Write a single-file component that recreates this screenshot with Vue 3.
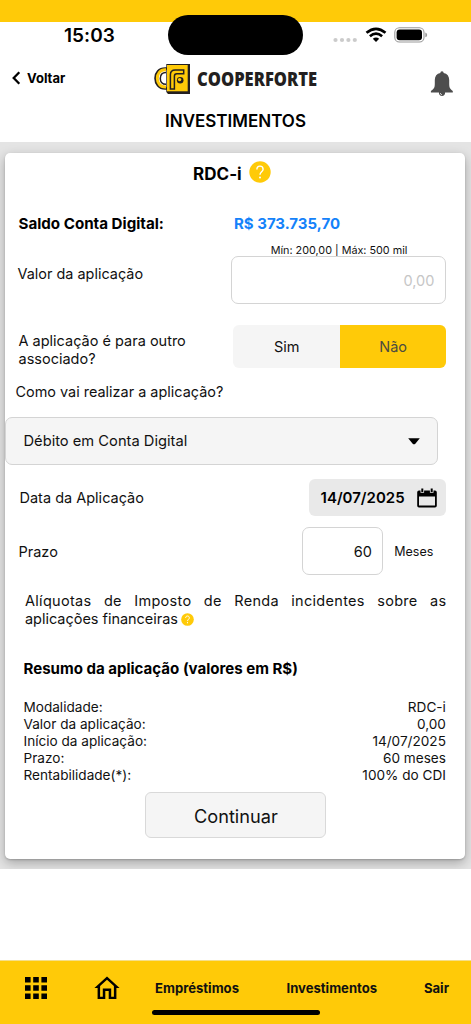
<script setup>
const summary = [
  { label: 'Modalidade:', value: 'RDC-i' },
  { label: 'Valor da aplicação:', value: '0,00' },
  { label: 'Início da aplicação:', value: '14/07/2025' },
  { label: 'Prazo:', value: '60 meses' },
  { label: 'Rentabilidade(*):', value: '100% do CDI' },
]
</script>

<template>
  <div class="screen">
    <header class="header">
      <div class="stripe"></div>
      <div class="island"></div>
      <div class="status">
        <span class="clock">15:03</span>
        <div class="signals">
          <svg class="dots" width="26" height="6" viewBox="0 0 26 6">
            <g fill="#cbcbcb"><circle cx="3.5" cy="3" r="2.1" /><circle cx="10" cy="3" r="2.1" /><circle cx="16.4" cy="3" r="2.1" /><circle cx="22.8" cy="3" r="2.1" /></g>
          </svg>
          <svg class="wifi" width="22" height="16" viewBox="0 0 22 16">
            <g fill="none" stroke="#000" stroke-width="2.7">
              <path d="M1.5 5.8Q11 -2.2 20.5 5.8" />
              <path d="M4.9 9.2Q11 4 17.1 9.2" />
            </g>
            <path d="M7.8 11.8Q11 9 14.2 11.8L11 15Z" />
          </svg>
          <svg class="battery" width="34" height="16" viewBox="0 0 34 16">
            <rect x="0.8" y="0.8" width="29.2" height="14.2" rx="4.6" fill="none" stroke="#999" stroke-width="1.1" />
            <rect x="2.6" y="2.5" width="25.4" height="10.8" rx="3" />
            <path d="M31.3 5.6Q33.2 6.2 33.2 7.9T31.3 10.2Z" fill="#999" />
          </svg>
        </div>
      </div>
      <div class="brandbar">
        <div class="back">
          <svg width="9" height="14" viewBox="0 0 9 14"><path d="M7.3 1.3L1.7 7L7.3 12.7" fill="none" stroke="#000" stroke-width="2.3" /></svg>
          <span>Voltar</span>
        </div>
        <div class="brand">
          <svg width="37" height="32" viewBox="0 0 37 32">
            <path d="M13 5.5H11.2C4.8 5.5 1.4 10 1.4 15.3S4.8 25.5 11.2 25.5H13" fill="none" stroke="#231f20" stroke-width="2.4" />
            <path d="M12 6.8H11.2C6 6.8 3.3 10.8 3.3 15.3S6 24 11.2 24H12" fill="none" stroke="#ffca08" stroke-width="2.9" />
            <path d="M12 9.5C8 9.5 6.3 12.2 6.3 15.4S8 21.2 12 21.2" fill="none" stroke="#231f20" stroke-width="1.5" />
            <path d="M12.3 1H36V31H14L12.3 29Z" fill="#231f20" />
            <path d="M13 2H33.7V28.3H13Z" fill="#ffca08" />
            <path d="M16.4 26V11.8Q16.4 7 21.2 7H29.7V10.7H22.8Q20.4 10.7 20.4 13.2V26Z" fill="#ffca08" stroke="#231f20" stroke-width="1.5" />
            <circle cx="26.2" cy="17.3" r="3.3" fill="#231f20" />
            <circle cx="25.6" cy="16.6" r="1.7" fill="#ffca08" />
          </svg>
          <span class="brand-name">COOPERFORTE</span>
        </div>
        <svg class="bell" width="24" height="26" viewBox="0 0 24 26">
          <path fill="#4d4d4d" d="M12 .3C13.1.3 13.6 1 13.6 2.1C17.3 2.8 19.2 5.4 19.2 9V12.5C19.2 16.6 20 18.1 22.8 20V21.5H15.1C15.1 23.8 14 25 12 25S8.9 23.8 8.9 21.5H.9V20C4 18.1 4.8 16.6 4.8 12.5V9C4.8 5.4 6.7 2.8 10.4 2.1C10.4 1 10.9.3 12 .3Z" />
          <path d="M10.3 22Q10.5 23.6 12 23.8" stroke="#fff" stroke-width=".7" fill="none" />
        </svg>
      </div>
      <h1>INVESTIMENTOS</h1>
    </header>

    <main class="body">
      <section class="card">
        <div class="title">
          <h2>RDC-i</h2>
          <svg width="22" height="22" viewBox="0 0 22 22">
            <circle cx="11" cy="11" r="10.7" fill="#ffca08" />
            <path d="M7.9 8.5C7.9 6.4 9.1 5.1 11 5.1S14.1 6.4 14.1 8.2C14.1 10.8 11 10.8 11 13.7" fill="none" stroke="#fff" stroke-width="1.4" />
            <circle cx="11" cy="16.4" r="1" fill="#fff" />
          </svg>
        </div>

        <div class="row balance">
          <strong>Saldo Conta Digital:</strong>
          <strong class="amount">R$ 373.735,70</strong>
        </div>

        <div class="limits"><span>Mín: 200,00 | Máx: 500 mil</span></div>
        <div class="row value">
          <label>Valor da aplicação</label>
          <div class="field">0,00</div>
        </div>

        <div class="row member">
          <label>A aplicação é para outro<br />associado?</label>
          <div class="toggle">
            <span>Sim</span>
            <span class="on">Não</span>
          </div>
        </div>

        <div class="how">Como vai realizar a aplicação?</div>
        <div class="select">
          <span>Débito em Conta Digital</span>
          <svg width="12" height="7" viewBox="0 0 12 7"><path d="M.2.3H11.8L7.3 5.7Q6 7 4.7 5.7Z" /></svg>
        </div>

        <div class="row date">
          <label>Data da Aplicação</label>
          <div class="datebox">
            <span>14/07/2025</span>
            <svg width="20" height="20" viewBox="0 0 20 20">
              <path fill-rule="evenodd" d="M2 2.4H18Q19.8 2.4 19.8 4.2V17.8Q19.8 19.6 18 19.6H2Q.2 19.6.2 17.8V4.2Q.2 2.4 2 2.4ZM2 8.6V17.6H18V8.6Z" />
              <path d="M5.3 0V4.8M14.7 0V4.8" stroke="#e9e9e9" stroke-width="3.6" />
              <path d="M5.3 .5V4M14.7 .5V4" stroke="#000" stroke-width="2" />
            </svg>
          </div>
        </div>

        <div class="row term">
          <label>Prazo</label>
          <div class="months">60</div>
          <span class="unit">Meses</span>
        </div>

        <p class="tax">
          Alíquotas de Imposto de Renda incidentes sobre as <span class="tight">aplicações financeiras</span>
          <svg width="13" height="13" viewBox="0 0 22 22">
            <circle cx="11" cy="11" r="10.7" fill="#ffca08" />
            <path d="M7.9 8.5C7.9 6.4 9.1 5.1 11 5.1S14.1 6.4 14.1 8.2C14.1 10.8 11 10.8 11 13.7" fill="none" stroke="#fff" stroke-width="1.6" />
            <circle cx="11" cy="16.4" r="1" fill="#fff" />
          </svg>
        </p>

        <h3>Resumo da aplicação (valores em R$)</h3>
        <dl>
          <div v-for="item in summary" :key="item.label">
            <dt>{{ item.label }}</dt>
            <dd>{{ item.value }}</dd>
          </div>
        </dl>

        <button type="button">Continuar</button>
      </section>
    </main>

    <nav class="nav">
      <svg class="apps" width="22" height="22" viewBox="0 0 22 22">
        <path d="M0 0H5.6V5.6H0ZM8.2 0H13.8V5.6H8.2ZM16.4 0H22V5.6H16.4ZM0 8.2H5.6V13.8H0ZM8.2 8.2H13.8V13.8H8.2ZM16.4 8.2H22V13.8H16.4ZM0 16.4H5.6V22H0ZM8.2 16.4H13.8V22H8.2ZM16.4 16.4H22V22H16.4Z" />
      </svg>
      <svg class="home" width="26" height="24" viewBox="0 0 26 24">
        <path fill-rule="evenodd" d="M13 .5L25.6 12H22.4V23H14.7V15H11.3V23H3.6V12H.4ZM13 3.7L6.1 10V20.8H8.8V12.5H17.2V20.8H19.9V10Z" />
      </svg>
      <span class="loans">Empréstimos</span>
      <span class="invest">Investimentos</span>
      <span class="exit">Sair</span>
      <div class="homebar"></div>
    </nav>
  </div>
</template>

<style>
body { margin: 0; background: #fff; }
</style>

<style scoped>
* { box-sizing: border-box; }
.screen {
  position: relative;
  display: flex;
  flex-direction: column;
  width: 471px;
  height: 1024px;
  overflow: hidden;
  background: #fff;
  color: #111;
  font-family: Inter, "Liberation Sans", sans-serif;
  font-size: 14.5px;
  white-space: nowrap;
}
svg { display: block; flex: none; }
h1, h2, h3, p, dl, dd { margin: 0; }

.header { height: 142px; position: relative; flex: none; }
.stripe { height: 22px; background: #ffca08; }
.island {
  position: absolute;
  left: 168px;
  top: 15px;
  width: 135px;
  height: 39.5px;
  border-radius: 20px;
  background: #000;
}
.status { display: flex; justify-content: space-between; align-items: center; height: 27px; padding: 0 43px 0 64px; }
.clock { font-size: 19px; font-weight: 600; color: #000; letter-spacing: .05px; }
.signals { display: flex; align-items: center; gap: 7px; }
.dots { margin-top: 9px; }
.wifi { margin: -2px 0 0; }
.battery { margin-top: -2px; }
.brandbar { display: flex; align-items: center; height: 59px; padding: 0 17px 0 12px; }
.back { display: flex; align-items: center; gap: 6px; width: 142px; margin-top: -2px; font-size: 13px; font-weight: 700; color: #000; }
.brand { display: flex; align-items: center; gap: 6px; flex: 1; height: 32px; }
.brand-name {
  color: #231f20;
  font-family: "Open Sans", "Noto Sans", sans-serif;
  font-size: 20px;
  font-weight: 800;
  transform: scaleX(.828);
  transform-origin: left;
}
.bell { margin-top: 11px; }
h1 { height: 27px; line-height: 27px; text-align: center; font-size: 17px; font-weight: 600; color: #000; }

.body { flex: none; height: 727px; padding: 10.5px 5.6px 10px 5.4px; background: #e4e4e4; overflow: hidden; }
.card {
  display: flex;
  flex-direction: column;
  height: 706px;
  background: #fff;
  border-radius: 5px;
  box-shadow: 0 4px 12px rgba(0, 0, 0, .28), 0 1px 2px rgba(0, 0, 0, .18);
}
.title { display: flex; align-items: center; justify-content: center; gap: 7px; height: 42.5px; padding-right: 7px; }
.title h2 { font-size: 17px; font-weight: 700; color: #000; }
.title svg { margin-top: -4px; }
.row { display: flex; align-items: center; flex: none; }
.balance { height: 56px; padding-left: 13.1px; font-size: 15px; color: #000; }
.balance strong:first-child { width: 215.5px; font-size: 15.15px; }
.amount { color: #1482fa; }
.limits { display: flex; justify-content: flex-end; height: 11px; margin-top: -6px; padding-right: 58px; font-size: 10.8px; line-height: 12px; }
.value { align-items: flex-start; justify-content: space-between; padding: 0 19px 0 12.1px; height: 48px; }
.value label { line-height: 36px; font-size: 14.45px; }
.field, .months { border: 1.5px solid #d4d4d4; border-radius: 7px; height: 48px; display: flex; align-items: center; justify-content: flex-end; }
.field { width: 215px; padding-right: 11px; color: #c6c6c6; }
.member { margin-top: 21px; height: 43px; padding: 0 19px 0 13.1px; justify-content: space-between; }
.member label { line-height: 18px; padding-top: 6px; }
.toggle { display: flex; width: 213px; height: 43px; border-radius: 6px; overflow: hidden; background: #f5f5f5; }
.toggle span { flex: 1; display: flex; align-items: center; justify-content: center; }
.toggle .on { background: #ffca08; color: #4b4b40; }
.how { height: 49px; line-height: 48px; padding-left: 10.1px; font-size: 14.45px; }
.select {
  display: flex;
  align-items: center;
  justify-content: space-between;
  flex: none;
  width: 433px;
  height: 48px;
  padding: 0 17.5px 0 17.1px;
  border: 1.5px solid #d4d4d4;
  border-radius: 7px;
  background: #f5f5f5;
  font-size: 14.7px;
}
.date { margin-top: 14px; height: 37px; justify-content: space-between; padding: 0 19.5px 0 14.1px; }
.datebox { display: flex; align-items: center; justify-content: space-between; width: 136.5px; height: 37px; padding: 0 9px 0 11.2px; border-radius: 6px; background: #e9e9e9; font-size: 15px; font-weight: 600; color: #000; }
.term { margin-top: 11px; height: 48px; padding-left: 13.1px; }
.term label { width: 283.8px; }
.months { width: 81px; padding-right: 10.5px; }
.unit { margin-left: 11px; font-size: 12.5px; }
.tax { margin: 17px 19px 0 19.6px; line-height: 18px; white-space: normal; text-align: justify; letter-spacing: .3px; }
.tax .tight { letter-spacing: -.02px; }
.tax svg { display: inline-block; vertical-align: -2px; margin-left: 3.5px; }
h3 { margin: 32px 0 0 18.1px; font-size: 15.05px; line-height: 18px; font-weight: 700; color: #000; }
dl { margin: 21.4px 19.5px 0 18.1px; font-size: 13.6px; }
dl div { display: flex; justify-content: space-between; height: 16.8px; line-height: 17px; }
button { align-self: center; flex: none; width: 181px; height: 46px; margin-top: 9.1px; padding: 1px 0 0 1px; border: 1px solid #d9d9d9; border-radius: 6px; background: #f5f5f5; color: #111; font-family: inherit; font-size: 18.2px; }

.nav { position: relative; display: flex; align-items: center; height: 64px; margin-top: auto; padding: 0 22px 9px 25px; background: #ffca08; border-top: 1px solid #f5df8a; color: #111; font-size: 13.1px; font-weight: 700; }
.home { margin-left: 47px; margin-right: 35px; }
.invest { margin-left: 47.5px; }
.exit { margin-left: auto; }
.homebar { position: absolute; left: 152px; bottom: 9px; width: 168px; height: 5px; border-radius: 3px; background: #000; }
</style>
